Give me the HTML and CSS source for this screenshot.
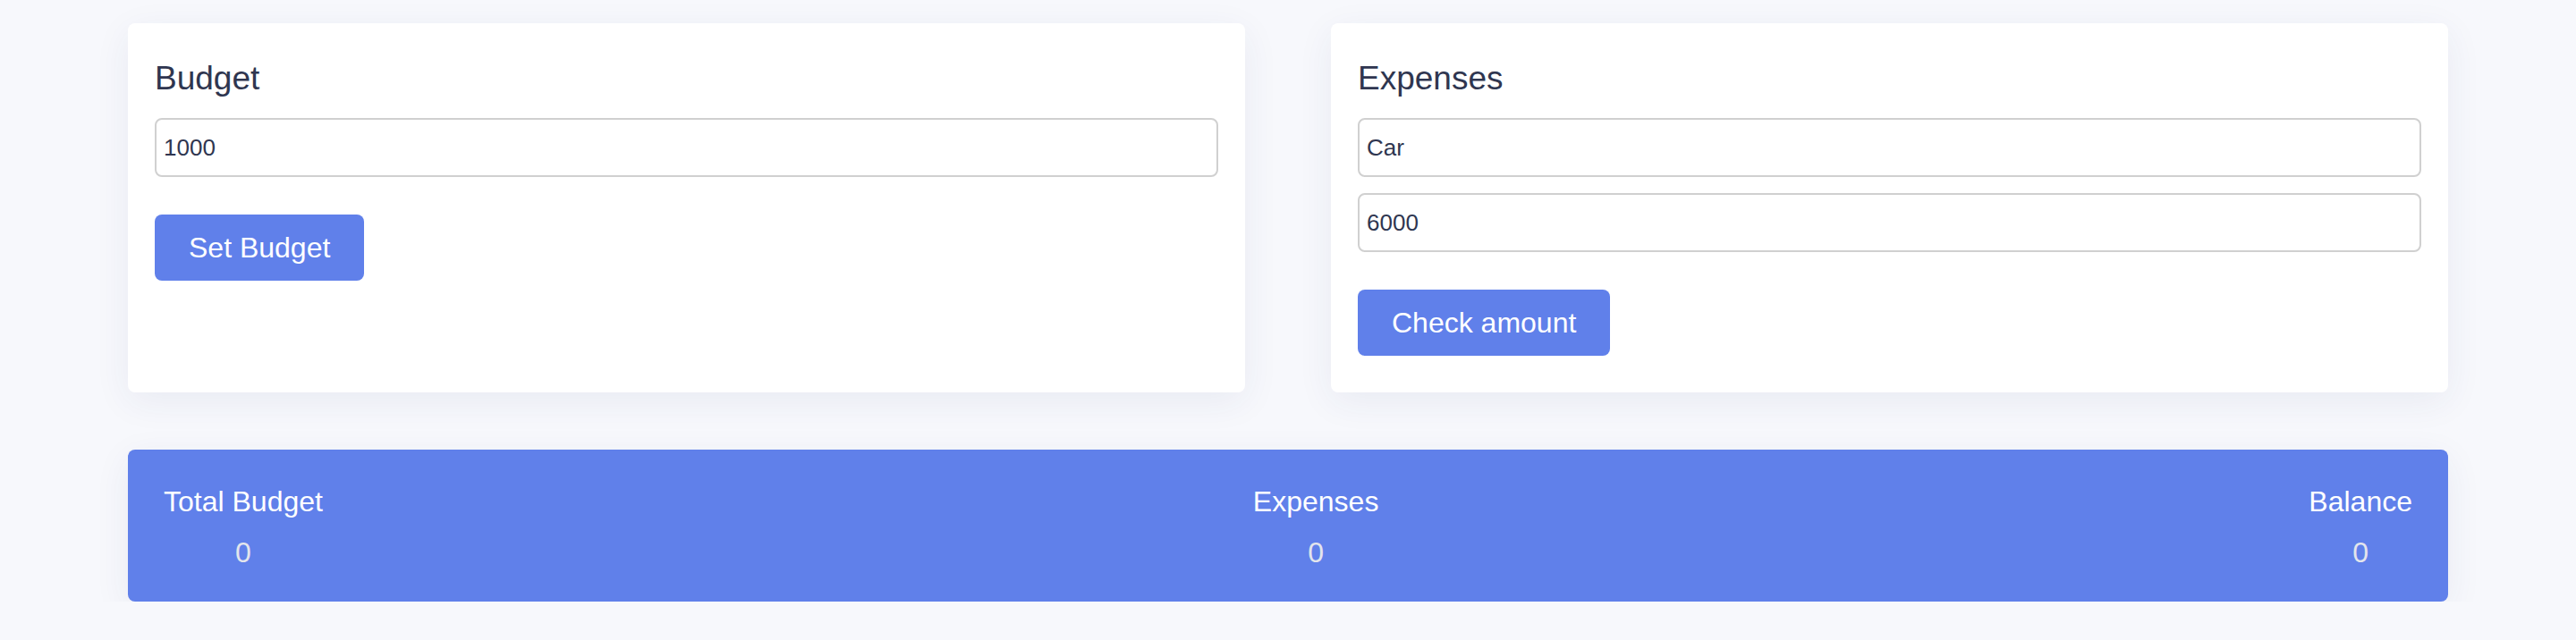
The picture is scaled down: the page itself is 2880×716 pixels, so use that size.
FILE: index.html
```html
<!DOCTYPE html>
<html lang="en">
<head>
<meta charset="utf-8">
<title>Budget App</title>
<link rel="stylesheet" href="styles.css">
</head>
<body>
<div class="container">
  <div class="cards">
    <div class="card">
      <h2 class="card-title">Budget</h2>
      <div class="fields">
        <input class="field" type="text" value="1000">
      </div>
      <button class="btn">Set Budget</button>
    </div>
    <div class="card">
      <h2 class="card-title">Expenses</h2>
      <div class="fields">
        <input class="field" type="text" value="Car">
        <input class="field" type="text" value="6000">
      </div>
      <button class="btn">Check amount</button>
    </div>
  </div>
  <div class="summary">
    <div class="stat">
      <div class="stat-label">Total Budget</div>
      <div class="stat-value">0</div>
    </div>
    <div class="stat">
      <div class="stat-label">Expenses</div>
      <div class="stat-value">0</div>
    </div>
    <div class="stat">
      <div class="stat-label">Balance</div>
      <div class="stat-value">0</div>
    </div>
  </div>
</div>
</body>
</html>
```

FILE: styles.css
```css
* {
  box-sizing: border-box;
}

body {
  margin: 0;
  background: #f7f8fc;
  font-family: "Liberation Sans", Arial, Helvetica, sans-serif;
  color: #2f3650;
}

.container {
  padding: 26px 143px 0 143px;
}

.cards {
  display: grid;
  grid-template-columns: 1fr 1fr;
  column-gap: 96px;
}

.card {
  background: #ffffff;
  border-radius: 8px;
  padding: 41px 30px 41px 30px;
  box-shadow: 0 10px 40px rgba(40, 50, 110, 0.07);
  display: flex;
  flex-direction: column;
  align-items: flex-start;
}

.card-title {
  margin: 0;
  font-size: 37px;
  line-height: 42px;
  font-weight: 400;
  color: #2f3650;
}

.fields {
  align-self: stretch;
  display: flex;
  flex-direction: column;
  gap: 18px;
  margin-top: 23px;
}

.field {
  display: block;
  width: 100%;
  height: 66px;
  border: 2px solid #d0d0d0;
  border-radius: 8px;
  padding: 0 8px;
  font-family: "Liberation Sans", Arial, Helvetica, sans-serif;
  font-size: 26px;
  color: #2f3650;
  background: #ffffff;
  outline: none;
}

.btn {
  margin-top: 42px;
  border: none;
  border-radius: 8px;
  background: #6080ea;
  color: #ffffff;
  font-family: "Liberation Sans", Arial, Helvetica, sans-serif;
  font-size: 32px;
  line-height: 38px;
  padding: 18px 38px;
  cursor: pointer;
}

.summary {
  margin-top: 64px;
  background: #6080ea;
  border-radius: 8px;
  padding: 40px 40px 36px 40px;
  display: flex;
  justify-content: space-between;
  box-shadow: 0 10px 40px rgba(40, 50, 110, 0.07);
}

.stat {
  display: flex;
  flex-direction: column;
  align-items: center;
  gap: 20px;
}

.stat-label {
  font-size: 32px;
  line-height: 37px;
  color: #ffffff;
}

.stat-value {
  font-size: 32px;
  line-height: 37px;
  color: #e3e5ec;
}
```
